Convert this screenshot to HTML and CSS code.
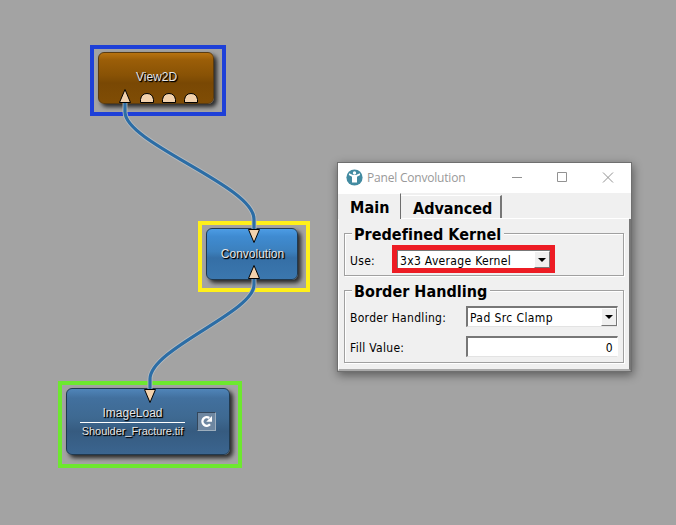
FILE: index.html
```html
<!DOCTYPE html>
<html lang="en">
<head>
<meta charset="utf-8">
<title>Convolution network</title>
<link rel="stylesheet" href="styles.css">
</head>
<body>
<main class="canvas">
  <div class="frame frame-view"><div class="node node-view"><span class="name">View2D</span></div></div>
  <div class="frame frame-conv"><div class="node node-conv"><span class="name">Convolution</span></div></div>
  <div class="frame frame-load">
    <div class="node node-load">
      <div class="labels"><span class="name">ImageLoad</span><span class="file">Shoulder_Fracture.tif</span></div>
      <button class="reload" aria-label="Reload">
        <svg width="15" height="15" viewBox="0 0 15 15"><path d="M11 10.300A4.300 4.300 0 1 1 10.300 4" fill="none" stroke="#fff" stroke-width="2.400"/><path d="M13 2V7.800H7.200Z" fill="#fff"/></svg>
      </button>
    </div>
  </div>

  <svg class="wires" width="676" height="525" viewBox="0 0 676 525">
    <g fill="none">
      <g stroke="#b8bdc1" stroke-width="4.800"><path d="M125 103V112C125 143 254 186 254 219V230"/><path d="M254 277V285C254 312 150 349 150 379V390"/></g>
      <g stroke="#2c6da5" stroke-width="3.200"><path d="M125 103V112C125 143 254 186 254 219V230"/><path d="M254 277V285C254 312 150 349 150 379V390"/></g>
    </g>
    <g fill="#f3d2ad" stroke="#000" stroke-width="1">
      <path d="M125 89.500L130.500 102.500H119.500Z"/>
      <path d="M140.500 102.500V99.500Q141.500 93.500 147 93.500T153.500 99.500V102.500Z"/>
      <path d="M162.500 102.500V99.500Q163.500 93.500 169 93.500T175.500 99.500V102.500Z"/>
      <path d="M184.500 102.500V99.500Q185.500 93.500 191 93.500T197.500 99.500V102.500Z"/>
      <path d="M248.500 229.500H259.500L254 242.500Z"/>
      <path d="M254 265.500L259.500 278.500H248.500Z"/>
      <path d="M144.500 389.500H155.500L150 402.500Z"/>
    </g>
  </svg>

  <section class="window">
    <header class="titlebar">
      <svg class="logo" width="17" height="17" viewBox="0 0 17 17"><circle cx="8.500" cy="8.500" r="8.100" fill="#438ba1"/><circle cx="8.500" cy="4" r="1.700" fill="#fff"/><path d="M3.200 4.300L7 6H10L13.800 4.300L14.200 6L11 7.800V13.500H6V7.800L2.800 6Z" fill="#fff"/></svg>
      <span class="title">Panel Convolution</span>
      <svg class="controls" width="104" height="12" viewBox="0 0 104 12" fill="none" stroke="#929292"><path d="M0 6.500H10M45.500 1.500H54.500V10.500H45.500ZM91 1.500L101 11.500M101 1.500L91 11.500"/></svg>
    </header>
    <nav class="tabs"><span class="tab main">Main</span><span class="tab adv">Advanced</span></nav>
    <div class="pane">
      <fieldset class="kernel">
        <legend>Predefined Kernel</legend>
        <div class="row"><label>Use:</label><div class="highlight"><div class="combo"><span>3x3 Average Kernel</span><i class="arrow"></i></div></div></div>
      </fieldset>
      <fieldset class="border">
        <legend>Border Handling</legend>
        <div class="row"><label>Border Handling:</label><div class="combo"><span>Pad Src Clamp</span><i class="arrow"></i></div></div>
        <div class="row"><label>Fill Value:</label><div class="field">0</div></div>
      </fieldset>
    </div>
  </section>
</main>
</body>
</html>
```

FILE: styles.css
```css
* { box-sizing: border-box; }
body { margin: 0; }
.canvas { position: relative; width: 676px; height: 525px; overflow: hidden; background: #a3a3a3; }
.wires { position: absolute; left: 0; top: 0; }

.frame { position: absolute; border: 4px solid; padding: 3px 4px; }
.frame-view { left: 90px; top: 45px; width: 136px; height: 71px; border-color: #1e40d8; }
.frame-conv { left: 198px; top: 221px; width: 112px; height: 71px; border-color: #fff01a; }
.frame-load { left: 58px; top: 381px; width: 184px; height: 87px; border-color: #6de82f; }
.node {
  display: flex; align-items: center; justify-content: center;
  border: 1px solid #20394f; border-radius: 6px;
  box-shadow: 3px 3px 4px rgba(0,0,0,.75);
  font: 12px/14px "Liberation Sans", Arial, sans-serif;
  color: #e6e6e6; text-shadow: 1px 1px 1px #000, 1px 1px 1px #000;
}
.node-view { width: 116px; height: 52px; padding: 0 0 2px 1px; border-color: #5a3c12; background: linear-gradient(#b87310, #9b5e08 14%, #885205 45%, #794804 60%, #804d05); }
.node-conv { width: 92px; height: 52px; padding: 0 0 1px 1px; background: linear-gradient(#4c9ce4, #3f8bd1 15%, #3c80bd 45%, #356fa6 58%, #3b77ae); }
.node-load { width: 164px; height: 67px; justify-content: flex-start; padding: 0 0 0 13px; background: linear-gradient(#5085b9, #42709e 14%, #3e6991 45%, #365b80 65%, #3b658f); }
.labels { width: 105px; text-align: center; display: flex; flex-direction: column; padding-top: 1px; }
.labels .name { height: 19px; padding-top: 2px; border-bottom: 1px solid #fff; }
.file { font-size: 11px; line-height: 17px; letter-spacing: -.06px; white-space: nowrap; }
.reload { margin: 0 0 0 12px; padding: 0; width: 19px; height: 19px; border: 1px solid #34475b; border-right-color: #9daebd; border-bottom-color: #9daebd; background: #6e87a1; display: flex; align-items: center; justify-content: center; }

.window {
  position: absolute; left: 337px; top: 162px; width: 295px; height: 210px;
  border: 1px solid #6f6f6f; background: #f0f0f0;
  box-shadow: 1px 3px 9px rgba(0,0,0,.45);
  font: 12px/16px "DejaVu Sans Condensed", Tahoma, sans-serif; letter-spacing: .3px; color: #000;
}
.titlebar { height: 30px; background: #fff; display: flex; align-items: center; padding: 0 0 2px 8px; }
.title { width: 138px; margin: 2px 0 0 4px; font: 12px/16px "Open Sans", "Noto Sans", sans-serif; letter-spacing: -.2px; color: #999; white-space: nowrap; }
.controls { margin-left: 7px; }
.tabs { display: flex; height: 26px; font-weight: bold; font-size: 16px; letter-spacing: 0; line-height: 26px; }
.tab { white-space: nowrap; }
.main { width: 63px; height: 26px; padding-left: 12px; border-right: 1px solid #6d6d6d; border-top: 1px solid #fff; letter-spacing: .1px; line-height: 28px; }
.adv { width: 101px; height: 23px; margin-top: 2px; padding-left: 12px; border-top: 1px solid #fff; border-right: 2px solid #777; line-height: 25px; }
.pane { height: 152px; border-left: 1px solid #fff; border-right: 2px solid #777; border-bottom: 2px solid #aaa; padding: 14px 4px 0 5px; position: relative; }
.pane::before { content: ""; position: absolute; left: 62px; right: 0; top: -1px; height: 1px; background: #fff; }
fieldset { position: relative; margin: 0; padding: 0 0 0 5px; width: 280px; border: 1px solid #a0a0a0; box-shadow: 1px 1px #fff, inset 1px 1px #fff; }
.kernel { height: 43px; padding-top: 11px; }
.border { height: 73px; margin-top: 14px; padding-top: 16px; }
legend { position: absolute; left: 7px; top: -9px; height: 20px; padding: 0 3px 0 2px; background: #f0f0f0; font-weight: bold; font-size: 16px; letter-spacing: .03px; line-height: 19px; white-space: nowrap; }
.row { display: flex; height: 21px; align-items: center; }
.border .row { margin-top: -1px; }
.border .row + .row { margin-top: 9px; }
.kernel .row { height: 28px; }
label { flex: none; width: 116px; padding-top: 2px; white-space: nowrap; }
.kernel label { width: 42px; padding-top: 3px; }
.highlight { width: 163px; height: 28px; border: 5px solid #ed1c24; }
.combo, .field { width: 152px; height: 21px; background: #fff; border: 1px solid #a0a0a0; border-top: 2px solid #777; border-left: 2px solid #777; border-right-color: #fff; border-bottom-color: #e3e3e3; }
.combo { display: flex; justify-content: space-between; padding-left: 2px; letter-spacing: .4px; line-height: 20px; white-space: nowrap; }
.highlight .combo { width: 153px; height: 18px; border-left: 1px solid #777; border-top: 1px solid #777; border-bottom: 0; border-right: 0; letter-spacing: .33px; }
.arrow { width: 16px; height: 100%; display: flex; align-items: center; justify-content: center; background: #f0f0f0; border: 1px solid #fff; border-right-color: #777; border-bottom-color: #777; }
.arrow::before { content: ""; border: 4px solid transparent; border-top-color: #000; border-bottom: 0; }
.field { padding-right: 4px; text-align: right; line-height: 20px; }
```
